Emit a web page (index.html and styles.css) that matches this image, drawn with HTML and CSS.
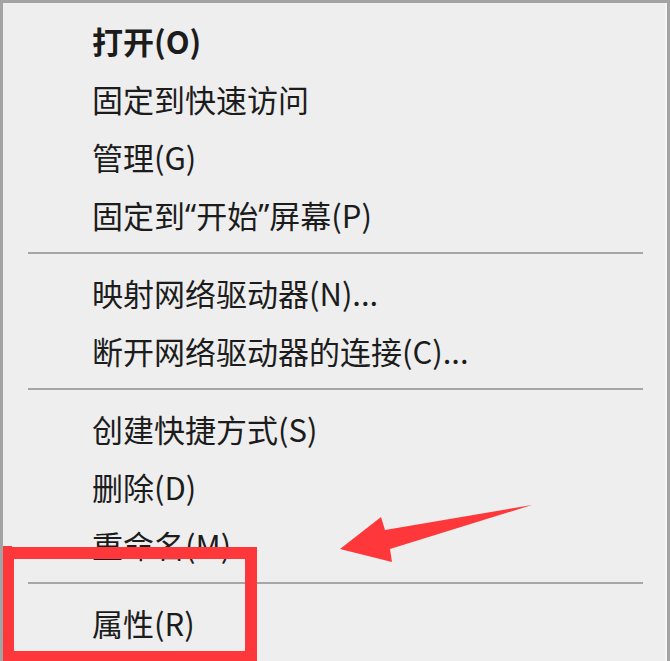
FILE: index.html
```html
<!DOCTYPE html>
<html lang="zh-CN">
<head>
<meta charset="utf-8">
<title>右键菜单</title>
<link rel="stylesheet" href="styles.css">
</head>
<body>
<div class="screen">
  <ul class="menu">
    <li class="item bold">打开(O)</li>
    <li class="item">固定到快速访问</li>
    <li class="item">管理(G)</li>
    <li class="item">固定到<span class="q">“</span>开始<span class="q">”</span>屏幕(P)</li>
    <li class="sep"></li>
    <li class="item">映射网络驱动器(N)...</li>
    <li class="item">断开网络驱动器的连接(C)...</li>
    <li class="sep"></li>
    <li class="item">创建快捷方式(S)</li>
    <li class="item">删除(D)</li>
    <li class="item">重命名(M)</li>
    <li class="sep"></li>
    <li class="item">属性(R)</li>
  </ul>
  <svg class="annot" width="670" height="661" viewBox="0 0 670 661" aria-hidden="true">
    <rect x="8" y="553" width="243" height="104" fill="none" stroke="#fe383a" stroke-width="12"/>
    <rect x="2" y="546" width="10" height="115" fill="#fe383a"/>
    <polygon points="340,549 381,517 385,530 532,505 390,549 392,562" fill="#fe383a"/>
  </svg>
</div>
</body>
</html>
```
FILE: styles.css
```css
html, body {
  margin: 0;
  padding: 0;
  background: #efefef;
}
.screen {
  position: relative;
  width: 670px;
  height: 661px;
  overflow: hidden;
  box-sizing: border-box;
  background: #eeeeee;
  border-top: 3px solid #a3a3a3;
  border-left: 3px solid #a3a3a3;
  border-right: 3px solid #a3a3a3;
  box-shadow: inset -2px 0 0 #f6f6f6;
}
.menu {
  list-style: none;
  margin: 0;
  padding: 8px 0 0 0;
  font-family: "Noto Sans CJK SC", "Noto Sans", sans-serif;
  font-size: 31px;
  color: #1c1c1c;
}
.item {
  height: 58px;
  display: flex;
  align-items: center;
  padding-left: 89px;
  white-space: nowrap;
}
.q {
  font-family: "Noto Sans", sans-serif;
}
.bold {
  font-weight: 700;
}
.sep {
  height: 20px;
  display: flex;
  align-items: center;
  padding: 0 24px 0 25px;
}
.sep::before {
  content: "";
  flex: 1;
  height: 2px;
  background: #a6a6a6;
}
.annot {
  position: absolute;
  left: -3px;
  top: -3px;
}
```
